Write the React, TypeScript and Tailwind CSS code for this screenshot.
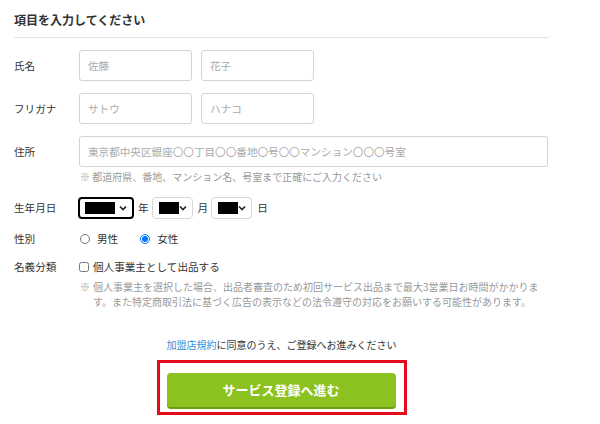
import React from "react";

const font = { fontFamily: '"Noto Sans CJK JP", "Noto Sans", sans-serif' };

function Chevron() {
  return (
    <svg width="8" height="6" viewBox="0 0 8 6" className="shrink-0">
      <path d="M1 1.5 L4 4.5 L7 1.5" fill="none" stroke="#222" strokeWidth="1.6" />
    </svg>
  );
}

function FakeSelect({ width, fill, focused }: { width: string; fill: string; focused?: boolean }) {
  return (
    <div
      className={`${width} h-[22px] rounded-[4px] flex items-center justify-between pl-[5px] pr-[5px] bg-white ${
        focused ? "border-2 border-black" : "border border-[#d6d6d6] pl-[6px]"
      }`}
    >
      <div className={`${fill} h-[12px] bg-black`} />
      <Chevron />
    </div>
  );
}

function Label({ children }: { children: React.ReactNode }) {
  return <div className="w-[65px] shrink-0 text-[10.6px] text-[#333]">{children}</div>;
}

export default function App() {
  return (
    <div className="w-[600px] h-[424px] bg-white overflow-hidden" style={font}>
      <div className="ml-[14px] w-[535px]">
        <div className="pt-[11px] pb-[8px] border-b border-[#e3e3e3]">
          <h2 className="text-[12px] leading-[18px] font-bold text-[#333]">項目を入力してください</h2>
        </div>

        <div className="mt-[12px] flex items-center">
          <Label>氏名</Label>
          <div className="flex gap-[9px]">
            <input
              placeholder="佐藤"
              className="w-[113px] h-[31px] rounded-[3px] border border-[#d3d3d3] px-[8px] text-[10.6px] placeholder:text-[#aaa] outline-none"
            />
            <input
              placeholder="花子"
              className="w-[113px] h-[31px] rounded-[3px] border border-[#d3d3d3] px-[8px] text-[10.6px] placeholder:text-[#aaa] outline-none"
            />
          </div>
        </div>

        <div className="mt-[12px] flex items-center">
          <Label>フリガナ</Label>
          <div className="flex gap-[9px]">
            <input
              placeholder="サトウ"
              className="w-[113px] h-[31px] rounded-[3px] border border-[#d3d3d3] px-[8px] text-[10.6px] placeholder:text-[#aaa] outline-none"
            />
            <input
              placeholder="ハナコ"
              className="w-[113px] h-[31px] rounded-[3px] border border-[#d3d3d3] px-[8px] text-[10.6px] placeholder:text-[#aaa] outline-none"
            />
          </div>
        </div>

        <div className="mt-[12px] flex items-start">
          <div className="h-[31px] flex items-center">
            <Label>住所</Label>
          </div>
          <div>
            <input
              placeholder="東京都中央区銀座〇〇丁目〇〇番地〇号〇〇マンション〇〇〇号室"
              className="w-[469px] h-[31px] rounded-[3px] border border-[#d3d3d3] px-[8px] text-[10.6px] placeholder:text-[#aaa] outline-none"
            />
            <p className="mt-[3px] pl-[1px] text-[10px] leading-[14px] text-[#999]">
              ※ 都道府県、番地、マンション名、号室まで正確にご入力ください
            </p>
          </div>
        </div>

        <div className="mt-[13px] flex items-center">
          <Label>生年月日</Label>
          <div className="flex items-center text-[10.6px] text-[#333] -ml-[1px]">
            <FakeSelect width="w-[56px]" fill="w-[30px]" focused />
            <span className="ml-[4px] mr-[3px]">年</span>
            <FakeSelect width="w-[41px]" fill="w-[20px]" />
            <span className="ml-[5px] mr-[3px]">月</span>
            <FakeSelect width="w-[41px]" fill="w-[20px]" />
            <span className="ml-[5px]">日</span>
          </div>
        </div>

        <div className="mt-[12px] flex items-center h-[16px]">
          <Label>性別</Label>
          <label className="flex items-center text-[10.6px] text-[#333]">
            <input type="radio" name="sex" className="w-[10px] h-[10px] m-0 ml-[1px]" />
            <span className="ml-[7px]">男性</span>
          </label>
          <label className="ml-[22px] flex items-center text-[10.6px] text-[#333]">
            <input type="radio" name="sex" defaultChecked className="w-[10px] h-[10px] m-0" />
            <span className="ml-[7px]">女性</span>
          </label>
        </div>

        <div className="mt-[12px] flex items-start">
          <div className="h-[16px] flex items-center">
            <Label>名義分類</Label>
          </div>
          <div>
            <label className="h-[16px] flex items-center text-[10.6px] text-[#333]">
              <input type="checkbox" className="w-[10px] h-[10px] m-0 rounded-none" />
              <span className="ml-[4px]">個人事業主として出品する</span>
            </label>
            <div className="mt-[4px] pl-[1px] flex text-[10px] leading-[15px] text-[#999] whitespace-nowrap">
              <span className="w-[13px] shrink-0">※</span>
              <span>
                個人事業主を選択した場合、出品者審査のため初回サービス出品まで最大3営業日お時間がかかりま
                <br />
                す。また特定商取引法に基づく広告の表示などの法令遵守の対応をお願いする可能性があります。
              </span>
            </div>
          </div>
        </div>

        <p className="mt-[29px] text-center text-[10px] leading-[14px] text-[#333]">
          <a className="text-[#2f8fd8]">加盟店規約</a>に同意のうえ、ご登録へお進みください
        </p>

        <div className="mt-[8px] flex justify-center">
          <div className="w-[250px] h-[55px] border-[3px] border-[#e60b1a] pt-[10px] pl-[7px]">
            <button
              type="button"
              className="w-[229px] h-[34px] rounded-[4px] bg-[#8cc21f] shadow-[0_2px_0_#6f9e12] text-white text-[13px] font-bold"
            >
              サービス登録へ進む
            </button>
          </div>
        </div>
      </div>
    </div>
  );
}
